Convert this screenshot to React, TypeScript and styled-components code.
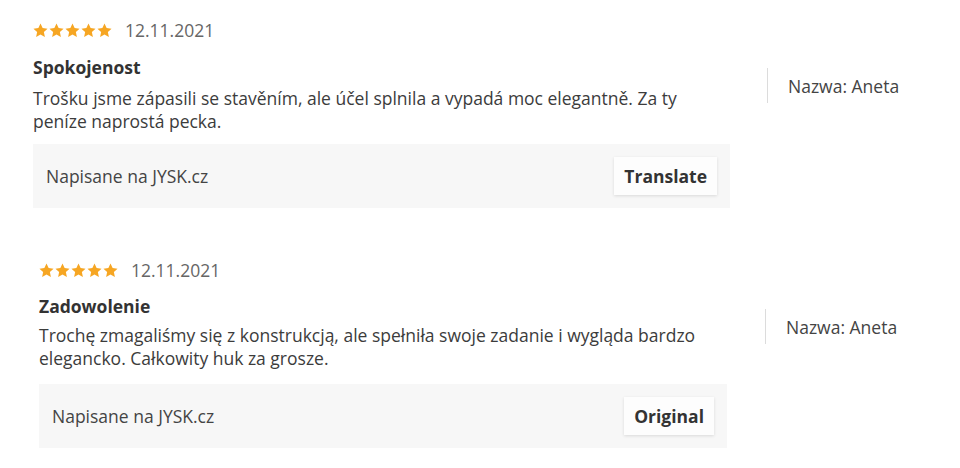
import React from "react";
import styled, { createGlobalStyle } from "styled-components";

const Global = createGlobalStyle`
  html, body { margin: 0; padding: 0; background: #fff; }
  body { font-family: "Open Sans", "Noto Sans", Arial, sans-serif; color: #333; }
`;

const Page = styled.div`
  display: flex;
  flex-direction: column;
  padding-top: 18px;
`;

const ReviewRow = styled.div<{ $left: number; $top: number }>`
  display: flex;
  align-items: flex-start;
  padding-left: ${(p) => p.$left}px;
  margin-top: ${(p) => p.$top}px;
`;

const Main = styled.div<{ $width: number }>`
  width: ${(p) => p.$width}px;
  display: flex;
  flex-direction: column;
`;

const MetaRow = styled.div`
  display: flex;
  align-items: center;
  gap: 13px;
  height: 24px;
`;

const Stars = styled.div`
  display: flex;
  gap: 1px;
  align-items: center;
`;

const DateText = styled.span`
  font-size: 17.5px;
  color: #666;
  line-height: 24px;
`;

const Title = styled.h3<{ $gap: number }>`
  margin: ${(p) => p.$gap}px 0 0;
  font-size: 17.5px;
  font-weight: 700;
  line-height: 24px;
  color: #333;
`;

const Body = styled.p<{ $gap: number }>`
  margin: ${(p) => p.$gap}px 0 0;
  font-size: 17.5px;
  line-height: 23px;
  color: #3c3c3c;
  padding-right: 20px;
`;

const Footer = styled.div<{ $gap: number }>`
  margin-top: ${(p) => p.$gap}px;
  height: 64px;
  background: #f7f7f7;
  display: flex;
  align-items: center;
  justify-content: space-between;
  padding: 0 13px;
`;

const Source = styled.span`
  font-size: 17.5px;
  color: #444;
`;

const Button = styled.button`
  height: 38px;
  padding: 0 10px;
  border: none;
  background: #fdfdfd;
  box-shadow: 0 1px 3px rgba(0, 0, 0, 0.12);
  font-family: "Open Sans", "Noto Sans", Arial, sans-serif;
  font-size: 17.5px;
  font-weight: 700;
  color: #333;
  cursor: pointer;
`;

const Side = styled.div<{ $gap: number; $top: number }>`
  margin-left: ${(p) => p.$gap}px;
  margin-top: ${(p) => p.$top}px;
  height: 35px;
  border-left: 1px solid #dcdcdc;
  padding-left: 20px;
  display: flex;
  align-items: center;
  font-size: 17.5px;
  color: #444;
`;

const Star = () => (
  <svg width="15" height="15" viewBox="0 0 24 24">
    <path
      fill="#f6a623"
      d="M12 0.8l3.4 7.3 7.9.9-5.9 5.4 1.6 7.9L12 18.3l-7 4 1.6-7.9L.7 9l7.9-.9z"
    />
  </svg>
);

type ReviewProps = {
  left: number;
  top: number;
  width: number;
  gaps: [number, number, number];
  sideGap: number;
  sideTop: number;
  title: string;
  text: string;
  button: string;
};

const Review = (p: ReviewProps) => (
  <ReviewRow $left={p.left} $top={p.top}>
    <Main $width={p.width}>
      <MetaRow>
        <Stars>
          {[0, 1, 2, 3, 4].map((i) => (
            <Star key={i} />
          ))}
        </Stars>
        <DateText>12.11.2021</DateText>
      </MetaRow>
      <Title $gap={p.gaps[0]}>{p.title}</Title>
      <Body $gap={p.gaps[1]}>{p.text}</Body>
      <Footer $gap={p.gaps[2]}>
        <Source>Napisane na JYSK.cz</Source>
        <Button>{p.button}</Button>
      </Footer>
    </Main>
    <Side $gap={p.sideGap} $top={p.sideTop}>Nazwa: Aneta</Side>
  </ReviewRow>
);

export default function App() {
  return (
    <>
      <Global />
      <Page>
        <Review
          left={33}
          top={0}
          width={697}
          gaps={[13, 8, 11]}
          sideGap={37}
          sideTop={50}
          title="Spokojenost"
          text="Trošku jsme zápasili se stavěním, ale účel splnila a vypadá moc elegantně. Za ty peníze naprostá pecka."
          button="Translate"
        />
        <Review
          left={39}
          top={50}
          width={688}
          gaps={[12, 6, 14]}
          sideGap={38}
          sideTop={51}
          title="Zadowolenie"
          text="Trochę zmagaliśmy się z konstrukcją, ale spełniła swoje zadanie i wygląda bardzo elegancko. Całkowity huk za grosze."
          button="Original"
        />
      </Page>
    </>
  );
}
